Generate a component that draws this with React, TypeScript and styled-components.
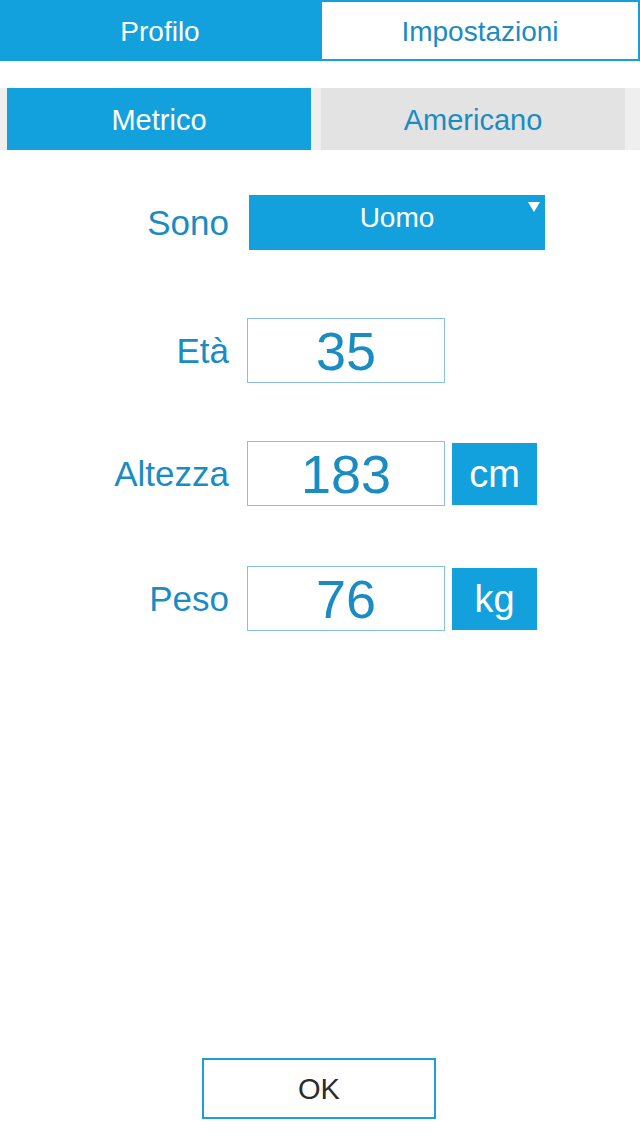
import * as React from 'react'
import styled, { createGlobalStyle } from 'styled-components'

const BLUE = '#13a1dd'
const TEXT_BLUE = '#1a8cc2'

const GlobalStyle = createGlobalStyle`
  html, body {
    margin: 0;
    padding: 0;
    background: #ffffff;
  }
  body {
    font-family: "Liberation Sans", Arial, Helvetica, sans-serif;
  }
`

const Style = {
  Page: styled.div`
    display: flex;
    flex-direction: column;
    width: 640px;
    min-height: 1136px;
    background: #ffffff;
  `,
  TopBar: styled.div`
    display: flex;
    height: 61px;
    background: ${BLUE};
  `,
  TopTab: styled.div<{ $active: boolean }>`
    flex: 1;
    display: flex;
    align-items: center;
    justify-content: center;
    padding-top: 3px;
    font-size: 28px;
    color: ${(p) => (p.$active ? '#ffffff' : TEXT_BLUE)};
    background: ${(p) => (p.$active ? BLUE : '#ffffff')};
    border: 2px solid ${BLUE};
  `,
  Segments: styled.div`
    display: flex;
    gap: 10px;
    height: 62px;
    margin-top: 27px;
    padding: 0 15px 0 7px;
    background: #efefef;
  `,
  Segment: styled.div<{ $active: boolean }>`
    flex: 1;
    display: flex;
    align-items: center;
    justify-content: center;
    padding-top: 2px;
    font-size: 29px;
    color: ${(p) => (p.$active ? '#ffffff' : TEXT_BLUE)};
    background: ${(p) => (p.$active ? BLUE : '#e3e3e3')};
  `,
  Form: styled.div`
    flex: 1;
    display: grid;
    grid-template-rows: 123px 123px 125px 70px;
    align-content: start;
    padding-top: 45px;
  `,
  Row: styled.div`
    display: grid;
    grid-template-columns: 229px auto auto;
    column-gap: 18px;
    justify-content: start;
    align-items: start;
  `,
  Label: styled.div<{ $height: number }>`
    text-align: right;
    font-size: 35px;
    line-height: ${(p) => p.$height}px;
    color: ${TEXT_BLUE};
  `,
  Fields: styled.div`
    display: flex;
    align-items: center;
    gap: 7px;
  `,
  Select: styled.div`
    position: relative;
    box-sizing: border-box;
    width: 296px;
    height: 55px;
    margin-left: 2px;
    padding-top: 9px;
    background: ${BLUE};
    color: #ffffff;
    font-size: 28px;
    line-height: 28px;
    text-align: center;
  `,
  Caret: styled.span`
    position: absolute;
    top: 7px;
    right: 5px;
    width: 0;
    height: 0;
    border-left: 6px solid transparent;
    border-right: 6px solid transparent;
    border-top: 10px solid #ffffff;
  `,
  Input: styled.div`
    box-sizing: border-box;
    width: 198px;
    height: 65px;
    border: 1px solid #86c2dc;
    color: ${TEXT_BLUE};
    font-size: 54px;
    line-height: 65px;
    text-align: center;
  `,
  Unit: styled.div`
    width: 85px;
    height: 62px;
    background: ${BLUE};
    color: #ffffff;
    font-size: 38px;
    line-height: 62px;
    text-align: center;
  `,
  Footer: styled.div`
    display: flex;
    justify-content: center;
    padding-bottom: 17px;
  `,
  OkButton: styled.div`
    box-sizing: border-box;
    width: 234px;
    height: 61px;
    margin-right: 2px;
    border: 2px solid #1b9fd7;
    color: #2b2b2b;
    font-size: 29px;
    line-height: 59px;
    text-align: center;
  `,
}

type Measure = {
  label: string
  value: string
  unit?: string
}

const measures: Measure[] = [
  { label: 'Età', value: '35' },
  { label: 'Altezza', value: '183', unit: 'cm' },
  { label: 'Peso', value: '76', unit: 'kg' },
]

const App = () => {
  return (
    <>
      <GlobalStyle />
      <Style.Page>
        <Style.TopBar>
          <Style.TopTab $active>Profilo</Style.TopTab>
          <Style.TopTab $active={false}>Impostazioni</Style.TopTab>
        </Style.TopBar>

        <Style.Segments>
          <Style.Segment $active>Metrico</Style.Segment>
          <Style.Segment $active={false}>Americano</Style.Segment>
        </Style.Segments>

        <Style.Form>
          <Style.Row>
            <Style.Label $height={55}>Sono</Style.Label>
            <Style.Select>
              Uomo
              <Style.Caret />
            </Style.Select>
          </Style.Row>
          {measures.map((m) => (
            <Style.Row key={`measure-${m.label}`}>
              <Style.Label $height={65}>{m.label}</Style.Label>
              <Style.Fields>
                <Style.Input>{m.value}</Style.Input>
                {m.unit && <Style.Unit>{m.unit}</Style.Unit>}
              </Style.Fields>
            </Style.Row>
          ))}
        </Style.Form>

        <Style.Footer>
          <Style.OkButton>OK</Style.OkButton>
        </Style.Footer>
      </Style.Page>
    </>
  )
}

export default App
